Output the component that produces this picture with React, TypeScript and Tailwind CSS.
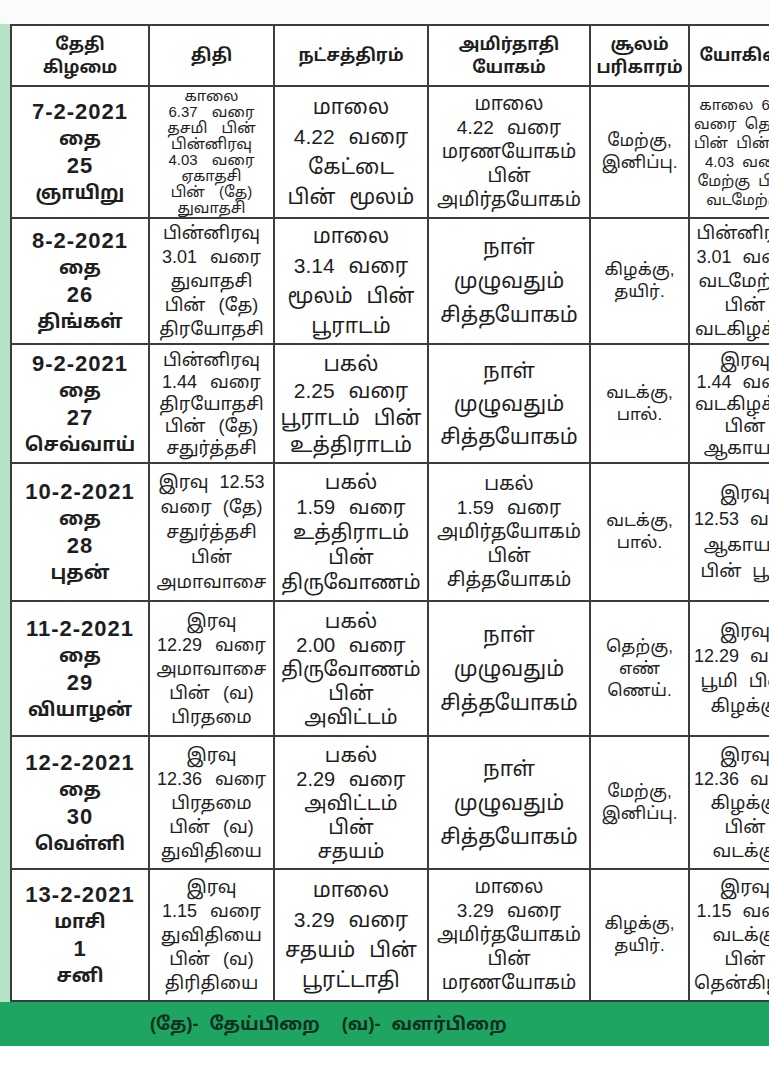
import React from "react";

type Cell = { lines: string[]; cls?: string; date?: boolean };
type Row = { h: string; cells: Cell[] };

const tamil = "font-['Liberation_Sans','Noto_Sans_Tamil','Lohit_Tamil',sans-serif]";

const big = "text-[21px] leading-[30px] [word-spacing:8px]";
const amr = "text-[19px] leading-[24px] [word-spacing:8px]";
const tit = "text-[18px] leading-[24px] [word-spacing:8px]";
const small = "text-[15px] leading-[16px] [word-spacing:10px]";
const nal = "text-[21px] leading-[34px]";
const sool = "text-[17px] leading-[22px]";
const last = "text-[18px] leading-[24px] [word-spacing:6px]";
const dateCls = "leading-[27px] font-bold";

const rows: Row[] = [
  {
    h: "h-[132px]",
    cells: [
      { lines: ["7-2-2021", "தை", "25", "ஞாயிறு"], cls: dateCls, date: true },
      { lines: ["காலை", "6.37 வரை", "தசமி பின்", "பின்னிரவு", "4.03 வரை", "ஏகாதசி", "பின் (தே)", "துவாதசி"], cls: small },
      { lines: ["மாலை", "4.22 வரை", "கேட்டை", "பின் மூலம்"], cls: big },
      { lines: ["மாலை", "4.22 வரை", "மரணயோகம்", "பின்", "அமிர்தயோகம்"], cls: amr },
      { lines: ["மேற்கு,", "இனிப்பு."], cls: sool },
      { lines: ["காலை 6.37", "வரை தெற்கு", "பின் பின்னிரவு", "4.03 வரை", "மேற்கு பின்", "வடமேற்கு"], cls: "text-[15px] leading-[19px] [word-spacing:4px]" },
    ],
  },
  {
    h: "h-[126px]",
    cells: [
      { lines: ["8-2-2021", "தை", "26", "திங்கள்"], cls: dateCls, date: true },
      { lines: ["பின்னிரவு", "3.01 வரை", "துவாதசி", "பின் (தே)", "திரயோதசி"], cls: tit },
      { lines: ["மாலை", "3.14 வரை", "மூலம் பின்", "பூராடம்"], cls: big },
      { lines: ["நாள்", "முழுவதும்", "சித்தயோகம்"], cls: nal },
      { lines: ["கிழக்கு,", "தயிர்."], cls: sool },
      { lines: ["பின்னிரவு", "3.01 வரை", "வடமேற்கு", "பின்", "வடகிழக்கு"], cls: last },
    ],
  },
  {
    h: "h-[119px]",
    cells: [
      { lines: ["9-2-2021", "தை", "27", "செவ்வாய்"], cls: dateCls, date: true },
      { lines: ["பின்னிரவு", "1.44 வரை", "திரயோதசி", "பின் (தே)", "சதுர்த்தசி"], cls: "text-[18px] leading-[22px] [word-spacing:8px]" },
      { lines: ["பகல்", "2.25 வரை", "பூராடம் பின்", "உத்திராடம்"], cls: "text-[21px] leading-[27px] [word-spacing:8px]" },
      { lines: ["நாள்", "முழுவதும்", "சித்தயோகம்"], cls: "text-[21px] leading-[33px]" },
      { lines: ["வடக்கு,", "பால்."], cls: sool },
      { lines: ["இரவு", "1.44 வரை", "வடகிழக்கு", "பின்", "ஆகாயம்"], cls: "text-[18px] leading-[22px] [word-spacing:6px]" },
    ],
  },
  {
    h: "h-[138px]",
    cells: [
      { lines: ["10-2-2021", "தை", "28", "புதன்"], cls: dateCls, date: true },
      { lines: ["இரவு 12.53", "வரை (தே)", "சதுர்த்தசி", "பின்", "அமாவாசை"], cls: "text-[18px] leading-[25px] [word-spacing:6px]" },
      { lines: ["பகல்", "1.59 வரை", "உத்திராடம்", "பின்", "திருவோணம்"], cls: "text-[20px] leading-[25px] [word-spacing:8px]" },
      { lines: ["பகல்", "1.59 வரை", "அமிர்தயோகம்", "பின்", "சித்தயோகம்"], cls: amr },
      { lines: ["வடக்கு,", "பால்."], cls: sool },
      { lines: ["இரவு", "12.53 வரை", "ஆகாயம்", "பின் பூமி"], cls: "text-[18px] leading-[26px] [word-spacing:6px]" },
    ],
  },
  {
    h: "h-[135px]",
    cells: [
      { lines: ["11-2-2021", "தை", "29", "வியாழன்"], cls: dateCls, date: true },
      { lines: ["இரவு", "12.29 வரை", "அமாவாசை", "பின் (வ)", "பிரதமை"], cls: tit },
      { lines: ["பகல்", "2.00 வரை", "திருவோணம்", "பின்", "அவிட்டம்"], cls: "text-[20px] leading-[24px] [word-spacing:8px]" },
      { lines: ["நாள்", "முழுவதும்", "சித்தயோகம்"], cls: nal },
      { lines: ["தெற்கு,", "எண்", "ணெய்."], cls: sool },
      { lines: ["இரவு", "12.29 வரை", "பூமி பின்", "கிழக்கு"], cls: "text-[18px] leading-[25px] [word-spacing:6px]" },
    ],
  },
  {
    h: "h-[133px]",
    cells: [
      { lines: ["12-2-2021", "தை", "30", "வெள்ளி"], cls: dateCls, date: true },
      { lines: ["இரவு", "12.36 வரை", "பிரதமை", "பின் (வ)", "துவிதியை"], cls: tit },
      { lines: ["பகல்", "2.29 வரை", "அவிட்டம்", "பின்", "சதயம்"], cls: "text-[20px] leading-[24px] [word-spacing:8px]" },
      { lines: ["நாள்", "முழுவதும்", "சித்தயோகம்"], cls: nal },
      { lines: ["மேற்கு,", "இனிப்பு."], cls: sool },
      { lines: ["இரவு", "12.36 வரை", "கிழக்கு", "பின்", "வடக்கு"], cls: last },
    ],
  },
  {
    h: "h-[132px]",
    cells: [
      { lines: ["13-2-2021", "மாசி", "1", "சனி"], cls: dateCls, date: true },
      { lines: ["இரவு", "1.15 வரை", "துவிதியை", "பின் (வ)", "திரிதியை"], cls: tit },
      { lines: ["மாலை", "3.29 வரை", "சதயம் பின்", "பூரட்டாதி"], cls: big },
      { lines: ["மாலை", "3.29 வரை", "அமிர்தயோகம்", "பின்", "மரணயோகம்"], cls: amr },
      { lines: ["கிழக்கு,", "தயிர்."], cls: sool },
      { lines: ["இரவு", "1.15 வரை", "வடக்கு", "பின்", "தென்கிழக்கு"], cls: last },
    ],
  },
];

const headers: string[][] = [
  ["தேதி", "கிழமை"],
  ["திதி"],
  ["நட்சத்திரம்"],
  ["அமிர்தாதி", "யோகம்"],
  ["சூலம்", "பரிகாரம்"],
  ["யோகினி"],
];

const td = "border-2 border-[#3c3c3c] align-middle text-center px-1 overflow-hidden whitespace-nowrap";

export default function App() {
  return (
    <div className={`w-[769px] h-[1080px] overflow-hidden bg-white text-[#1e1e1e] ${tamil}`}>
      <div className="h-[24px] bg-[#fbfbfb]" />
      <div className="bg-[#b5e2c4] pl-[10px]">
        <table className="table-fixed border-collapse bg-white w-[790px]">
          <colgroup>
            <col className="w-[138px]" />
            <col className="w-[125px]" />
            <col className="w-[154px]" />
            <col className="w-[162px]" />
            <col className="w-[99px]" />
            <col className="w-[112px]" />
          </colgroup>
          <thead>
            <tr className="h-[61px]">
              {headers.map((h, i) => (
                <th key={i} className={`${td} font-bold text-[17px] leading-[23px]`}>
                  {h.map((l, j) => (
                    <div key={j}>{l}</div>
                  ))}
                </th>
              ))}
            </tr>
          </thead>
          <tbody>
            {rows.map((r, i) => (
              <tr key={i} className={r.h}>
                {r.cells.map((c, j) => (
                  <td key={j} className={`${td} ${c.cls ?? ""}`}>
                    {c.lines.map((l, k) => (
                      <div
                        key={k}
                        className={
                          c.date
                            ? k % 2 === 0
                              ? "text-[22px] tracking-[1px]"
                              : "text-[19px]"
                            : ""
                        }
                      >
                        {l}
                      </div>
                    ))}
                  </td>
                ))}
              </tr>
            ))}
          </tbody>
        </table>
      </div>
      <div className="h-[44px] bg-[#1fa562] flex items-center pl-[150px]">
        <span className="text-[18px] font-bold text-[#10301f] [word-spacing:6px]">
          (தே)- தேய்பிறை &nbsp;(வ)- வளர்பிறை
        </span>
      </div>
    </div>
  );
}
